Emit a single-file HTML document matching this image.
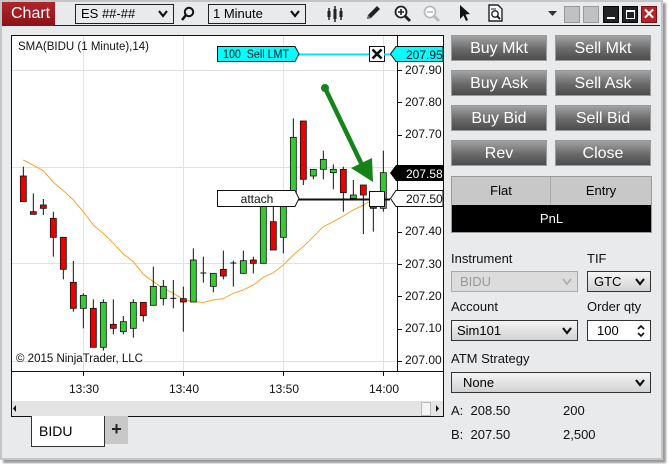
<!DOCTYPE html>
<html><head><meta charset="utf-8"><style>
*{margin:0;padding:0;box-sizing:border-box}
body{width:668px;height:464px;background:#fff;font-family:"Liberation Sans",Arial,sans-serif;position:relative;overflow:hidden}
.abs{position:absolute}
.win{position:absolute;left:0;top:0;width:663px;height:460px;background:#e9eaeb;border:2px solid #c4c5c6;box-shadow:3px 3px 2px #9a9a9a}
.btn{position:absolute;width:96px;height:26px;border:1px solid #9a9a9a;background:linear-gradient(#a3a3a3,#6a6a6a 55%,#4c4c4c);color:#fff;font-size:16px;text-align:center;line-height:26px}
.lbl{position:absolute;font-size:13px;color:#111}
.dd{position:absolute;height:21px;border:1px solid #333;background:linear-gradient(#f4f4f4,#d2d2d2);font-size:13px;line-height:19px;padding-left:8px}
.chev{position:absolute;right:5px;top:4px}
.wb{position:absolute;top:6px;width:16px;height:17px}
</style></head><body>
<div class="win"></div>
<div class="abs" style="left:2px;top:2px;width:53px;height:24px;background:linear-gradient(#b0262b,#8a1218);color:#fff;font-size:16px;line-height:24px;padding-left:9px">Chart</div>
<div class="abs" style="left:55px;top:25px;width:605px;height:1px;background:#222"></div>
<div class="abs" style="left:75px;top:4px;width:99px;height:20px;border:1px solid #222;background:#e9eaeb;font-size:13px;line-height:18px;padding-left:5px">ES ##-##<svg class="chev" style="top:5px" width="10" height="8"><path d="M1 1L5 6L9 1" stroke="#111" stroke-width="2.2" fill="none"/></svg></div>
<svg class="abs" style="left:180px;top:6px" width="16" height="16"><circle cx="9" cy="6" r="4.2" stroke="#111" stroke-width="2" fill="none"/><path d="M6 9L2 14" stroke="#111" stroke-width="2.5"/></svg>
<div class="abs" style="left:208px;top:4px;width:98px;height:20px;border:1px solid #222;background:#e9eaeb;font-size:13px;line-height:18px;padding-left:4px">1 Minute<svg class="chev" style="top:5px" width="10" height="8"><path d="M1 1L5 6L9 1" stroke="#111" stroke-width="2.2" fill="none"/></svg></div>
<svg class="abs" style="left:326px;top:5px" width="20" height="18"><g stroke="#222" stroke-width="1.5"><path d="M3 3V15M9 1V17M15 3V15"/></g><rect x="1.5" y="6" width="3" height="6" fill="#222"/><rect x="7.5" y="4" width="3" height="10" fill="#222"/><rect x="13.5" y="6" width="3" height="6" fill="#222"/></svg>
<svg class="abs" style="left:364px;top:4px" width="18" height="18"><path d="M3 15L4 11L13 2L16 5L7 14Z" fill="#222"/><path d="M3 15L4 11L7 14Z" fill="#666"/></svg>
<svg class="abs" style="left:393px;top:4px" width="20" height="20"><circle cx="8" cy="8" r="5.5" stroke="#222" stroke-width="1.8" fill="#fff"/><path d="M5 8H11M8 5V11" stroke="#222" stroke-width="1.6"/><path d="M12 12L17 17" stroke="#222" stroke-width="3"/></svg>
<svg class="abs" style="left:422px;top:4px" width="20" height="20"><circle cx="8" cy="8" r="5.5" stroke="#bbb" stroke-width="1.8" fill="#fff"/><path d="M5 8H11" stroke="#bbb" stroke-width="1.6"/><path d="M12 12L17 17" stroke="#bbb" stroke-width="3"/></svg>
<svg class="abs" style="left:458px;top:4px" width="14" height="18"><path d="M2 1L2 15L5.5 11.5L8 17L10 16L7.5 10.5L12 10Z" fill="#111"/></svg>
<svg class="abs" style="left:487px;top:4px" width="18" height="19"><path d="M2 1H11L15 5V17H2Z" stroke="#222" stroke-width="1.4" fill="#fff"/><circle cx="8" cy="10" r="3.2" stroke="#222" stroke-width="1.4" fill="none"/><path d="M10 12L13 15" stroke="#222" stroke-width="2"/><path d="M4 5H9" stroke="#222"/></svg>
<svg class="abs" style="left:548px;top:11px" width="9" height="6"><path d="M0 0H9L4.5 5Z" fill="#333"/></svg>
<div class="wb" style="left:564px;background:#c0c1c2;border:1px solid #999"></div>
<div class="wb" style="left:583px;background:#c0c1c2;border:1px solid #999"></div>
<div class="wb" style="left:603px;background:#222;border:1px solid #000"><div class="abs" style="left:3px;top:10px;width:8px;height:2px;background:#fff"></div></div>
<div class="wb" style="left:622px;background:#222;border:1px solid #000"><div class="abs" style="left:3px;top:3px;width:9px;height:9px;border:1.5px solid #fff;border-top-width:2.5px"></div></div>
<div class="wb" style="left:641px;background:#b52228;border:1px solid #7a1015;color:#fff;font-size:15px;font-weight:bold;text-align:center;line-height:15px">✕</div>

<div class="abs" style="left:11px;top:35px;width:433px;height:382px;background:#fff;border:1px solid #111"></div>
<svg class="abs" style="left:0;top:0" width="668" height="464" font-family="Liberation Sans, Arial, sans-serif">
<g stroke="#e2e2e2" stroke-width="1">
<path d="M12 70.5H397M12 167.5H397M12 263.5H397M12 361.5H397M83.5 36V371M183.5 36V371M283.5 36V371M383.5 36V371"/>
</g>
<path d="M397.5 36V371M12 371.5H444" stroke="#111"/>
<g stroke="#111" id="ticks"></g>
<path d="M83.5 371V376M183.5 371V376M283.5 371V376M383.5 371V376" stroke="#111"/>
<text x="18" y="50" font-size="11.5" fill="#111">SMA(BIDU (1 Minute),14)</text>
<text x="16" y="362" font-size="11.5" fill="#111">© 2015 NinjaTrader, LLC</text>
<g font-size="12" fill="#111" text-anchor="middle"><text x="84" y="393">13:30</text><text x="184" y="393">13:40</text><text x="284" y="393">13:50</text><text x="384" y="393">14:00</text></g>
<g font-size="12" fill="#111"><text x="405" y="74">207.90</text><text x="405" y="106">207.80</text><text x="405" y="138">207.70</text><text x="405" y="235">207.40</text><text x="405" y="268">207.30</text><text x="405" y="300">207.20</text><text x="405" y="332">207.10</text><text x="405" y="364">207.00</text></g>
<polyline id="sma" fill="none" stroke="#f7a62c" stroke-width="1"/>
<g id="candles"></g>
<path d="M298 54.5H370" stroke="#00e5ee" stroke-width="2"/>
<path d="M217.5 46.5H295L299 54L295 61.5H217.5Z" fill="#00ffff" stroke="#111"/>
<text x="223" y="58" font-size="12" fill="#111" style="white-space:pre" textLength="66" lengthAdjust="spacingAndGlyphs">100  Sell LMT</text>
<rect x="369.5" y="46.5" width="15" height="15" fill="#fff" stroke="#111"/>
<path d="M372.5 49.5L381.5 58.5M381.5 49.5L372.5 58.5" stroke="#111" stroke-width="2.6"/>
<path d="M384 54.5H392" stroke="#00e5ee" stroke-width="2"/>
<path d="M443 46.5H396L390.5 54L396 61.5H443Z" fill="#00ffff" stroke="#111"/>
<text x="406" y="59" font-size="12" fill="#111">207.95</text>
<path d="M298 199.5H390" stroke="#111" stroke-width="2"/>
<path d="M217.5 190.5H295L299 198.5L295 206.5H217.5Z" fill="#fff" stroke="#111"/>
<text x="257" y="203" font-size="12" fill="#111" text-anchor="middle">attach</text>
<rect x="369.5" y="191.5" width="15" height="15" fill="#fff" stroke="#111"/>
<path d="M443 190.5H396L390.5 198.5L396 206.5H443Z" fill="#fff" stroke="#111"/>
<text x="406" y="203" font-size="12" fill="#111">207.50</text>
<path d="M444 165H396L390 173L396 181H444Z" fill="#000"/>
<text x="406" y="178" font-size="12" fill="#fff">207.58</text>
<circle cx="325" cy="88" r="4" fill="#15831a"/>
<path d="M325 88L362 165" stroke="#15831a" stroke-width="4.5"/>
<path d="M351 168L372 158L373 182Z" fill="#15831a"/>
<rect x="12" y="401" width="431" height="15" fill="#e4e4e4"/>
<path d="M16 405V412L13 408.5Z" fill="#111"/>
<path d="M436 405V412L439 408.5Z" fill="#111"/>
<rect x="421.5" y="402.5" width="9" height="13" fill="#f4f4f4" stroke="#bbb"/>
</svg>
<div class="abs" style="left:31px;top:416px;width:74px;height:31px;background:#fff;border:1px solid #333;border-top:none;font-size:14px;line-height:30px;padding-left:7px">BIDU</div>
<div class="abs" style="left:105px;top:416px;width:23px;height:28px;background:#c8c8c8;font-size:18px;font-weight:bold;text-align:center;line-height:27px;color:#222">+</div>

<div class="btn" style="left:451px;top:35px">Buy Mkt</div><div class="btn" style="left:555px;top:35px">Sell Mkt</div>
<div class="btn" style="left:451px;top:70px">Buy Ask</div><div class="btn" style="left:555px;top:70px">Sell Ask</div>
<div class="btn" style="left:451px;top:105px">Buy Bid</div><div class="btn" style="left:555px;top:105px">Sell Bid</div>
<div class="btn" style="left:451px;top:140px">Rev</div><div class="btn" style="left:555px;top:140px">Close</div>
<div class="abs" style="left:451px;top:176px;width:201px;height:57px;border:1px solid #999;background:#000">
<div class="abs" style="left:0;top:0;width:99px;height:28px;background:#c8c8c8;border-right:1px solid #aaa;font-size:13px;text-align:center;line-height:28px">Flat</div>
<div class="abs" style="left:99px;top:0;width:100px;height:28px;background:#c8c8c8;font-size:13px;text-align:center;line-height:28px">Entry</div>
<div class="abs" style="left:0;top:28px;width:199px;height:27px;color:#fff;font-size:13px;text-align:center;line-height:27px">PnL</div>
</div>
<div class="lbl" style="left:451px;top:251px">Instrument</div>
<div class="lbl" style="left:587px;top:251px">TIF</div>
<div class="dd" style="left:451px;top:271px;width:127px;border-color:#aaa;background:#dcdcdc;color:#999">BIDU<svg class="chev" style="top:6px" width="10" height="8"><path d="M1 1L5 6L9 1" stroke="#aaa" stroke-width="1.5" fill="none"/></svg></div>
<div class="dd" style="left:587px;top:271px;width:64px;padding-left:6px">GTC<svg class="chev" style="top:6px" width="10" height="8"><path d="M1 1L5 6L9 1" stroke="#111" stroke-width="2.2" fill="none"/></svg></div>
<div class="lbl" style="left:451px;top:299px">Account</div>
<div class="lbl" style="left:587px;top:299px">Order qty</div>
<div class="dd" style="left:451px;top:320px;width:127px;padding-left:5px">Sim101<svg class="chev" style="top:6px" width="10" height="8"><path d="M1 1L5 6L9 1" stroke="#111" stroke-width="2.2" fill="none"/></svg></div>
<div class="dd" style="left:587px;top:320px;width:64px;background:#fff;padding-left:9px">100<svg class="chev" style="top:3px" width="8" height="14"><path d="M1 5L4 2L7 5M1 9L4 12L7 9" stroke="#111" stroke-width="1.6" fill="none"/></svg></div>
<div class="lbl" style="left:451px;top:351px">ATM Strategy</div>
<div class="dd" style="left:451px;top:372px;width:200px;padding-left:11px">None<svg class="chev" style="top:6px" width="10" height="8"><path d="M1 1L5 6L9 1" stroke="#111" stroke-width="2.2" fill="none"/></svg></div>
<div class="lbl" style="left:451px;top:403px">A:&nbsp; 208.50</div>
<div class="lbl" style="left:563px;top:403px">200</div>
<div class="lbl" style="left:451px;top:427px">B:&nbsp; 207.50</div>
<div class="lbl" style="left:563px;top:427px">2,500</div>
<script>
var c=[[70,438,515,410,515,'r'],[100,545,553,490,553,'r'],[130,525,535,507,555,'r'],[160,565,622,545,680,'r'],[190,622,718,622,748,'r'],[220,757,835,693,845,'r'],[250,796,835,790,895,'g'],[280,835,952,808,952,'r'],[310,817,952,808,962,'g'],[340,883,895,808,913,'r'],[370,875,905,858,913,'g'],[400,817,895,808,923,'g'],[430,817,857,817,875,'r'],[460,769,826,710,826,'g'],[490,769,806,750,826,'g'],[520,805,807,750,835,'d'],[550,806,816,770,905,'r'],[580,690,816,655,816,'g'],[610,729,731,680,758,'d'],[640,730,769,730,787,'g'],[670,718,738,662,748,'r'],[700,699,701,692,770,'d'],[730,692,730,662,730,'g'],[760,690,700,680,730,'r'],[790,500,700,500,700,'g'],[820,575,660,530,660,'r'],[850,490,622,530,670,'g'],[880,322,500,265,500,'g'],[910,273,448,273,465,'r'],[940,418,438,418,448,'g'],[970,388,418,362,448,'g'],[1000,418,428,403,478,'g'],[1030,418,488,410,545,'r'],[1060,495,505,450,505,'g'],[1090,465,495,465,612,'r'],[1120,525,535,485,605,'r'],[1150,428,535,362,545,'g']];
var s='';c.forEach(function(k){var x=k[0]/3,bt=30+k[1]/3,bb=30+k[2]/3,wt=30+k[3]/3,wb=30+k[4]/3;
s+='<path d="M'+x+' '+wt+'V'+wb+'" stroke="#111" stroke-width="1"/>';
if(k[5]=='d')s+='<path d="M'+(x-3)+' '+bt+'H'+(x+3)+'" stroke="#111"/>';
else s+='<rect x="'+(x-3)+'" y="'+bt+'" width="6" height="'+Math.max(bb-bt,2)+'" fill="'+(k[5]=='r'?'#ee0000':'#33cc33')+'" stroke="#111" stroke-width="0.8"/>';});
document.getElementById('candles').innerHTML=s;
var p=[[70,390],[130,422],[160,457],[190,482],[220,510],[250,545],[280,585],[310,610],[340,640],[370,672],[400,695],[430,733],[460,755],[490,775],[520,790],[550,808],[580,815],[610,817],[640,810],[670,806],[700,790],[730,780],[760,765],[790,742],[820,728],[850,705],[880,675],[910,650],[940,620],[970,590],[1000,575],[1030,558],[1060,540],[1090,525],[1120,508]];
document.getElementById('sma').setAttribute('points',p.map(function(q){return (q[0]/3)+','+(30+q[1]/3)}).join(' '));
var t='';for(var i=0;i<10;i++){var y=Math.round(70+i*32.33)+0.5;t+='<path d="M397 '+y+'H402"/>';}
document.getElementById('ticks').innerHTML=t;
</script>
</body></html>
